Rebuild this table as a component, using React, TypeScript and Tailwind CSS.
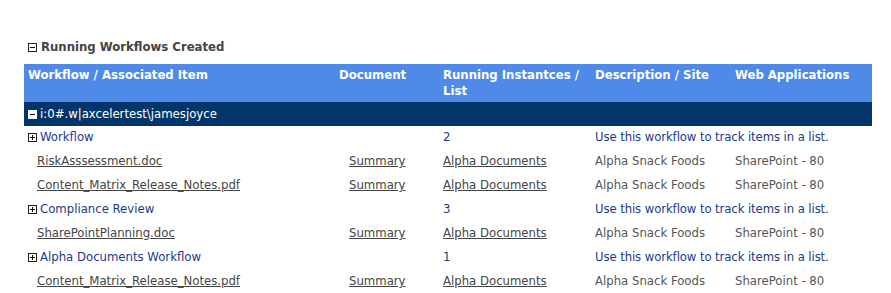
import React from "react";

type Row =
  | { kind: "workflow"; name: string; count: string; description: string }
  | { kind: "item"; file: string; list: string; site: string; app: string };

const rows: Row[] = [
  { kind: "workflow", name: "Workflow", count: "2", description: "Use this workflow to track items in a list." },
  { kind: "item", file: "RiskAsssessment.doc", list: "Alpha Documents", site: "Alpha Snack Foods", app: "SharePoint - 80" },
  { kind: "item", file: "Content_Matrix_Release_Notes.pdf", list: "Alpha Documents", site: "Alpha Snack Foods", app: "SharePoint - 80" },
  { kind: "workflow", name: "Compliance Review", count: "3", description: "Use this workflow to track items in a list." },
  { kind: "item", file: "SharePointPlanning.doc", list: "Alpha Documents", site: "Alpha Snack Foods", app: "SharePoint - 80" },
  { kind: "workflow", name: "Alpha Documents Workflow", count: "1", description: "Use this workflow to track items in a list." },
  { kind: "item", file: "Content_Matrix_Release_Notes.pdf", list: "Alpha Documents", site: "Alpha Snack Foods", app: "SharePoint - 80" },
];

// small +/- expander box used on group rows
function ToggleBox({ open, inverted }: { open: boolean; inverted?: boolean }) {
  const stroke = inverted ? "#ffffff" : "#222222";
  return (
    <svg width="9" height="9" viewBox="0 0 9 9" className="shrink-0">
      <rect x="0.5" y="0.5" width="8" height="8" fill="#ffffff" stroke={stroke} />
      <line x1="2" y1="4.5" x2="7" y2="4.5" stroke="#111111" />
      {!open && <line x1="4.5" y1="2" x2="4.5" y2="7" stroke="#111111" />}
    </svg>
  );
}

const cell = "px-1 pt-[3px] pb-[5px] align-top leading-4 whitespace-nowrap";
const th = "px-1 pt-[3px] pb-[3px] align-top text-left font-bold leading-4";
const link = "text-[#444] underline";

export default function App() {
  return (
    <div
      className="h-[293px] w-[891px] bg-white pt-[39px] pl-6 text-[13px] text-[#444]"
      style={{ fontFamily: '"DejaVu Sans Condensed", Tahoma, "Liberation Sans", sans-serif' }}
    >
      <div className="flex h-4 items-center gap-[4px] pl-1 font-bold leading-4 text-[#444]">
        <ToggleBox open />
        <span>Running Workflows Created</span>
      </div>

      <table className="mt-[9px] w-[848px] table-fixed border-collapse">
        <colgroup>
          <col className="w-[311px]" />
          <col className="w-[104px]" />
          <col className="w-[152px]" />
          <col className="w-[140px]" />
          <col className="w-[141px]" />
        </colgroup>
        <thead>
          <tr className="h-[38px] bg-[#4f8ae8] text-white">
            <th className={th}>Workflow / Associated Item</th>
            <th className={th}>Document</th>
            <th className={th}>Running Instantces / List</th>
            <th className={th}>Description / Site</th>
            <th className={th}>Web Applications</th>
          </tr>
        </thead>
        <tbody>
          <tr className="h-6 bg-[#03356a] text-white">
            <td colSpan={5} className="px-1 py-1 leading-4">
              <div className="flex items-center gap-[3px]">
                <ToggleBox open inverted />
                <span>i:0#.w|axcelertest\jamesjoyce</span>
              </div>
            </td>
          </tr>
          {rows.map((row, i) =>
            row.kind === "workflow" ? (
              <tr key={i} className="h-6 text-[#1c3a8c]">
                <td className={cell}>
                  <div className="flex items-center gap-[3px]">
                    <ToggleBox open={false} />
                    <span>{row.name}</span>
                  </div>
                </td>
                <td className={cell} />
                <td className={cell}>{row.count}</td>
                <td colSpan={2} className={`${cell} tracking-[-0.1px]`}>{row.description}</td>
              </tr>
            ) : (
              <tr key={i} className="h-6 text-[#555]">
                <td className={cell}>
                  <a href="#" className={`${link} pl-[9px]`}>{row.file}</a>
                </td>
                <td className={cell}>
                  <a href="#" className={`${link} pl-[10px]`}>Summary</a>
                </td>
                <td className={cell}>
                  <a href="#" className={link}>{row.list}</a>
                </td>
                <td className={cell}>{row.site}</td>
                <td className={cell}>{row.app}</td>
              </tr>
            )
          )}
        </tbody>
      </table>
    </div>
  );
}
